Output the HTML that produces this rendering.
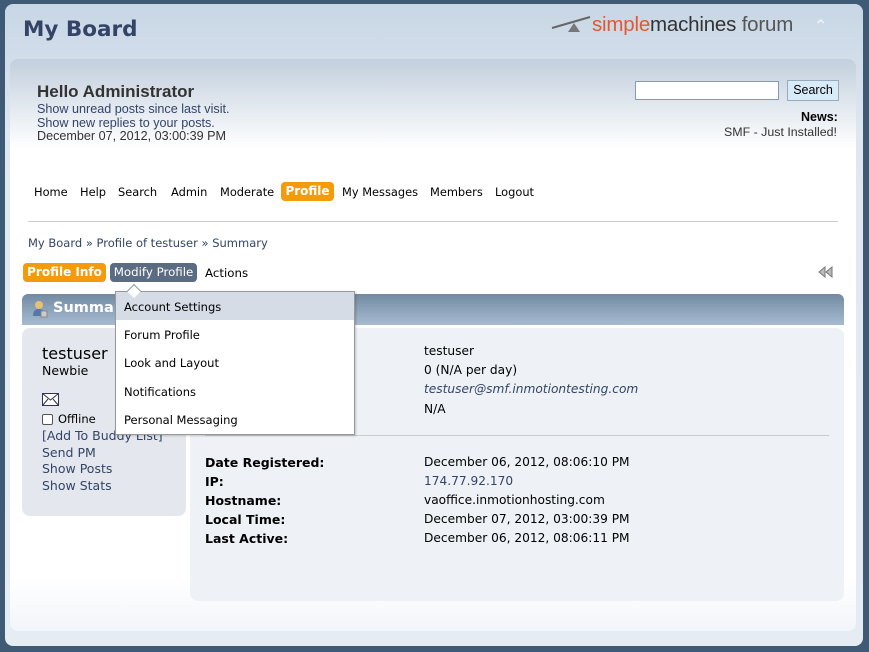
<!DOCTYPE html>
<html><head><meta charset="utf-8"><style>
*{margin:0;padding:0;box-sizing:border-box}
body{width:869px;height:652px;background:#3e5a74;font-family:"DejaVu Sans",Verdana,sans-serif;position:relative;overflow:hidden}
.a{position:absolute;white-space:nowrap}
#wrap{left:5px;top:4px;width:858px;height:642px;border-radius:8px;background:linear-gradient(#c8d6e5,#dfe7f0 20%,#e6ecf3);}
#inner{left:10px;top:59px;width:846px;height:572px;border-radius:8px;background:linear-gradient(#c2cfdd,#fff 90px,#fff 520px,#f2f5f9)}
.lib{font-family:"Liberation Sans",Arial,sans-serif}
.nav{font-size:11.4px;color:#000;top:185px}
.lbl{font-weight:bold;left:205px;font-size:12.5px;color:#000}
.val{left:424px;font-size:12.2px;color:#000}
.dd{left:124px;font-size:11.5px;color:#000}
</style></head><body>
<div class="a" id="wrap"></div>
<div class="a" style="left:23px;top:17px;font-size:21.5px;font-weight:bold;color:#334466">My Board</div>
<svg class="a" style="left:550px;top:14px" width="45" height="20"><line x1="2" y1="14" x2="40" y2="3" stroke="#666" stroke-width="2"/><polygon points="18,18 24,9 30,18" fill="#777"/></svg>
<div class="a lib" style="left:592px;top:13px;font-size:20.5px;letter-spacing:-0.2px"><span style="color:#e05a30">simple</span><span style="color:#333">machines</span> <span style="color:#555">forum</span></div>
<div class="a" style="left:814px;top:16px;font-size:16px;color:#eef3f8;font-weight:bold">&#8963;</div>
<div class="a" id="inner"></div>
<div class="a lib" style="left:37px;top:82px;font-size:17px;font-weight:bold;color:#333">Hello Administrator</div>
<div class="a lib" style="left:37px;top:103px;font-size:12.6px;color:#334466;line-height:13.5px">Show unread posts since last visit.<br>Show new replies to your posts.<br><span style="color:#333">December 07, 2012, 03:00:39 PM</span></div>
<div class="a" style="left:635px;top:81px;width:144px;height:19px;background:#fff;border:1px solid #7f9db9"></div>
<div class="a lib" style="left:787px;top:80px;width:52px;height:21px;background:#d8ebf9;border:1px solid #9ab;font-size:12.5px;text-align:center;line-height:19px">Search</div>
<div class="a lib" style="left:801px;top:110px;font-size:12.5px;font-weight:bold">News:</div>
<div class="a lib" style="left:724px;top:125px;font-size:12.4px;color:#333">SMF - Just Installed!</div>
<div class="a nav" style="left:34px">Home</div>
<div class="a nav" style="left:80px">Help</div>
<div class="a nav" style="left:118px">Search</div>
<div class="a nav" style="left:171px">Admin</div>
<div class="a nav" style="left:220px">Moderate</div>
<div class="a" style="left:281px;top:182px;width:53px;height:19px;background:#f39b0c;border-radius:4px;color:#fff;font-weight:bold;font-size:12px;text-align:center;line-height:19px">Profile</div>
<div class="a nav" style="left:342px">My Messages</div>
<div class="a nav" style="left:430px">Members</div>
<div class="a nav" style="left:495px">Logout</div>
<div class="a" style="left:28px;top:221px;width:810px;height:1px;background:#ccc"></div>
<div class="a" style="left:28px;top:236px;font-size:11.5px;color:#346">My Board » Profile of testuser » Summary</div>
<div class="a" style="left:23px;top:263px;width:83px;height:19px;background:#f39b0c;border-radius:4px;color:#fff;font-weight:bold;font-size:12px;text-align:center;line-height:19px">Profile Info</div>
<div class="a" style="left:110px;top:263px;width:87px;height:19px;background:#5b6b82;border-radius:4px;color:#fff;font-size:11.8px;text-align:center;line-height:19px">Modify Profile</div>
<div class="a" style="left:205px;top:266px;font-size:11.8px">Actions</div>
<svg class="a" style="left:818px;top:266px" width="16" height="12"><polygon points="1,6 7,1 7,11" fill="#bbb" stroke="#777" stroke-width="1"/><polygon points="8,6 14,1 14,11" fill="#bbb" stroke="#777" stroke-width="1"/></svg>
<div class="a" style="left:22px;top:294px;width:822px;height:31px;border-radius:6px 6px 0 0;background:linear-gradient(#728aa2,#a6bbd0)"></div>
<svg class="a" style="left:32px;top:300px" width="16" height="18"><circle cx="7" cy="5" r="4" fill="#e8c070"/><path d="M1 16 Q1 9 7 9 Q13 9 13 16Z" fill="#5577aa"/><rect x="9" y="11" width="6" height="6" fill="#ccc" stroke="#888"/></svg>
<div class="a" style="left:53px;top:300px;font-size:14.5px;font-weight:bold;color:#fff">Summary</div>
<div class="a" style="left:22px;top:328px;width:164px;height:188px;border-radius:8px;background:#e4e8ee"></div>
<div class="a" style="left:190px;top:328px;width:654px;height:273px;border-radius:8px;background:#eef2f6"></div>
<div class="a" style="left:42px;top:344px;font-size:16px;color:#000">testuser</div>
<div class="a" style="left:42px;top:363px;font-size:12.5px">Newbie</div>
<svg class="a" style="left:42px;top:393px" width="18" height="14"><rect x="0.5" y="0.5" width="16" height="12" fill="#fff" stroke="#335"/><path d="M0.5 0.5 L8.5 7 L16.5 0.5 M0.5 12.5 L6 6 M16.5 12.5 L11 6" fill="none" stroke="#335"/></svg>
<div class="a" style="left:42px;top:414px;width:11px;height:11px;border:1px solid #555;background:#fff;border-radius:2px"></div>
<div class="a" style="left:58px;top:412px;font-size:11.5px">Offline</div>
<div class="a" style="left:42px;top:428px;font-size:12.5px;color:#346;line-height:16.5px">[Add To Buddy List]<br>Send PM<br>Show Posts<br>Show Stats</div>
<div class="a val" style="top:344px">testuser</div>
<div class="a val" style="top:363px">0 (N/A per day)</div>
<div class="a val" style="top:382px;font-style:italic;color:#346">testuser@smf.inmotiontesting.com</div>
<div class="a val" style="top:402px">N/A</div>
<div class="a" style="left:205px;top:435px;width:624px;height:1px;background:#ccc"></div>
<div class="a lbl" style="top:455px">Date Registered:</div><div class="a val" style="top:455px">December 06, 2012, 08:06:10 PM</div>
<div class="a lbl" style="top:474px">IP:</div><div class="a val" style="top:474px;color:#346">174.77.92.170</div>
<div class="a lbl" style="top:493px">Hostname:</div><div class="a val" style="top:493px">vaoffice.inmotionhosting.com</div>
<div class="a lbl" style="top:512px">Local Time:</div><div class="a val" style="top:512px">December 07, 2012, 03:00:39 PM</div>
<div class="a lbl" style="top:531px">Last Active:</div><div class="a val" style="top:531px">December 06, 2012, 08:06:11 PM</div>
<div class="a" style="left:115px;top:291px;width:240px;height:144px;background:#fff;border:1px solid #999;box-shadow:1px 1px 2px rgba(0,0,0,.2)"></div>
<div class="a" style="left:116px;top:292px;width:238px;height:28px;background:#d5dce5"></div>
<div class="a" style="left:129px;top:286px;width:10px;height:10px;background:#fff;border-left:1px solid #999;border-top:1px solid #999;transform:rotate(45deg)"></div>
<div class="a dd" style="top:300px">Account Settings</div>
<div class="a dd" style="top:328px">Forum Profile</div>
<div class="a dd" style="top:356px">Look and Layout</div>
<div class="a dd" style="top:385px">Notifications</div>
<div class="a dd" style="top:413px">Personal Messaging</div>
</body></html>
